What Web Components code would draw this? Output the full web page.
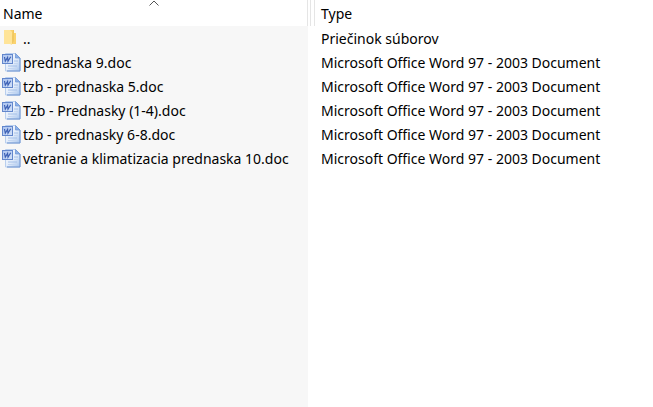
<!DOCTYPE html>
<html lang="sk">
<head>
<meta charset="utf-8">
<meta name="viewport" content="width=device-width, initial-scale=1">
<title>Files</title>
<style>
    body {
        margin: 0;
        background: #fff;
        color: #000;
        font-family: "Noto Sans", "Open Sans", sans-serif;
        font-size: 14px;
    }
</style>
</head>
<body>
<file-list></file-list>

<script>
class FileIcon extends HTMLElement {
    constructor() {
        super();
        this.attachShadow({ mode: 'open' });
    }

    getFolder() {
        return `
            <svg viewBox="0 1 20 20" aria-hidden="true">
                <path d="M3 2h9v3h3v11H3z" fill="#fbd36f"/>
                <path d="M12 2h1v11l-2 3h-1z" fill="#f0c862"/>
                <path d="M3 2h6l2 2v13l-2 -1H3z" fill="#ffe498"/>
            </svg>
        `;
    }

    getDocument() {
        return `
            <svg viewBox="0 1 20 20" aria-hidden="true">
                <defs>
                    <linearGradient id="page" x1="0" y1="0" x2="1" y2="1">
                        <stop offset="0" stop-color="#fff"/>
                        <stop offset=".55" stop-color="#e2ecfa"/>
                        <stop offset="1" stop-color="#a5c3ec"/>
                    </linearGradient>
                    <linearGradient id="badge" x1="0" y1="0" x2="1" y2="1">
                        <stop offset="0" stop-color="#a9c2ef"/>
                        <stop offset="1" stop-color="#d5e3f8"/>
                    </linearGradient>
                </defs>
                <path d="M4.500 1.500h10l4.500 4.500v13h-14.500z" fill="url(#page)" stroke="#b9cfee"/>
                <path d="M19 6v13h-13" fill="none" stroke="#6d93cf"/>
                <path d="M14.500 1.500v4.500h4.500z" fill="#8db1e8" stroke="#6a92d2" stroke-width=".7"/>
                <path d="M13 9h4M7 14h9" stroke="#a5c0e8"/>
                <path d="M13 11.500h4M7 16.500h9" stroke="#c3d6f1"/>
                <rect x="1.500" y="2.500" width="10" height="9" fill="url(#badge)" stroke="#6387cc"/>
                <path d="M3.500 5L4.300 9.200L6.600 5.400L7 9.200L9.700 4.700" fill="none" stroke="#3b5fb4" stroke-width="1.200"/>
            </svg>
        `;
    }

    getStyles() {
        return `
        <style>
            :host {
                display: block;
                flex: none;
                width: 20px;
                height: 20px;
            }

            svg {
                display: block;
                width: 100%;
                height: 100%;
                overflow: visible;
            }
        </style>
        `;
    }

    connectedCallback() {
        const icon = this.getAttribute('kind') === 'folder' ? this.getFolder() : this.getDocument();
        this.shadowRoot.innerHTML = this.getStyles() + icon;
    }
}

class ColumnTitle extends HTMLElement {
    constructor() {
        super();
        this.attachShadow({ mode: 'open' });
    }

    getTemplate() {
        const template = document.createElement('template');
        template.innerHTML = `
            <style>
                :host {
                    display: grid;
                    grid-template-columns: 1fr auto 1fr;
                    flex: 1;
                    height: 26px;
                    line-height: 28px;
                }

                span {
                    padding-left: 3px;
                }

                svg {
                    display: block;
                    width: 10px;
                    height: 6px;
                }
            </style>
            <span><slot></slot></span>
            ${this.hasAttribute('sorted') ? `
            <svg viewBox="0 0 10 6" aria-hidden="true">
                <path d="M.5 5.500L5 1L9.500 5.500" fill="none" stroke="#555"/>
            </svg>` : ''}
        `;
        return template;
    }

    connectedCallback() {
        this.shadowRoot.appendChild(this.getTemplate().content.cloneNode(true));
    }
}

class FileName extends HTMLElement {
    constructor() {
        super();
        this.attachShadow({ mode: 'open' });
    }

    connectedCallback() {
        this.shadowRoot.innerHTML = `
            <style>
                :host {
                    display: flex;
                    align-items: center;
                    gap: 2px;
                    padding-left: 1px;
                }
            </style>
            <file-icon kind="${this.getAttribute('kind')}"></file-icon>
            <slot></slot>
        `;
    }
}

class FileList extends HTMLElement {
    constructor() {
        super();
        this.attachShadow({ mode: 'open' });
        const word = 'Microsoft Office Word 97 - 2003 Document';
        this.files = [
            { name: '..', type: 'Priečinok súborov', kind: 'folder' },
            { name: 'prednaska 9.doc', type: word, kind: 'doc' },
            { name: 'tzb - prednaska 5.doc', type: word, kind: 'doc' },
            { name: 'Tzb - Prednasky (1-4).doc', type: word, kind: 'doc' },
            { name: 'tzb - prednasky 6-8.doc', type: word, kind: 'doc' },
            { name: 'vetranie a klimatizacia prednaska 10.doc', type: word, kind: 'doc' }
        ];
    }

    getRows() {
        return this.files.map(file => `
            <tr>
                <td><file-name kind="${file.kind}">${file.name}</file-name></td>
                <td class="type">${file.type}</td>
            </tr>
        `).join('');
    }

    getTemplate() {
        const template = document.createElement('template');
        template.innerHTML = `
            <table>
                <colgroup><col class="name-column"><col></colgroup>
                <thead>
                    <tr>
                        <th scope="col" aria-sort="ascending">
                            <div class="head first"><column-title sorted>Name</column-title></div>
                        </th>
                        <th scope="col">
                            <div class="head"><span class="grip"></span><column-title>Type</column-title></div>
                        </th>
                    </tr>
                </thead>
                <tbody>${this.getRows()}</tbody>
            </table>
            ${this.getStyles()}
        `;
        return template;
    }

    getStyles() {
        return `
        <style>
            :host {
                --name-width: 308px;
                display: block;
                min-height: 100vh;
                background: linear-gradient(#f7f7f7, #f7f7f7) no-repeat 0 0 / var(--name-width) 100%;
            }

            table {
                width: 100%;
                table-layout: fixed;
                border-collapse: collapse;
            }

            .name-column {
                width: var(--name-width);
            }

            th,
            td {
                padding: 0;
                text-align: left;
                font-weight: normal;
                white-space: nowrap;
            }

            th {
                background: #fff;
            }

            td {
                padding-top: 2px;
                line-height: 22px;
            }

            .head {
                display: flex;
                gap: 3px;
            }

            .first {
                border-right: 1px solid #e5e5e5;
            }

            .grip {
                box-sizing: border-box;
                width: 5px;
                margin-left: 2px;
                border: solid #e5e5e5;
                border-width: 0 1px;
            }

            .type {
                padding-left: 13px;
            }
        </style>
        `;
    }

    connectedCallback() {
        this.shadowRoot.appendChild(this.getTemplate().content.cloneNode(true));
    }
}

customElements.define('file-icon', FileIcon);
customElements.define('column-title', ColumnTitle);
customElements.define('file-name', FileName);
customElements.define('file-list', FileList);
</script>
</body>
</html>
